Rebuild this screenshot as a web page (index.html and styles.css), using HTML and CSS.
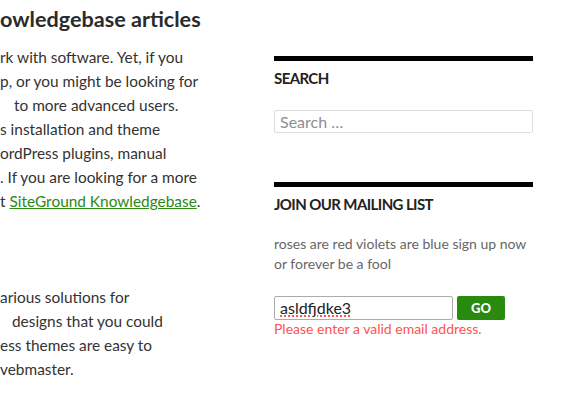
FILE: index.html
```html
<!DOCTYPE html>
<html lang="en">
<head>
<meta charset="utf-8">
<title>Knowledgebase articles</title>
<link rel="stylesheet" href="styles.css">
</head>
<body>
<div class="page">
  <main class="content">
    <h1 class="entry-title">owledgebase articles</h1>
    <p class="text">
      <span class="ln">rk with software. Yet, if you</span>
      <span class="ln">p, or you might be looking for</span>
      <span class="ln ln-in">to more advanced users.</span>
      <span class="ln">s installation and theme</span>
      <span class="ln">ordPress plugins, manual</span>
      <span class="ln">. If you are looking for a more</span>
      <span class="ln">t <a href="#" class="kb-link">SiteGround Knowledgebase</a>.</span>
    </p>
    <p class="text text-second">
      <span class="ln">arious solutions for</span>
      <span class="ln ln-in2">designs that you could</span>
      <span class="ln">ess themes are easy to</span>
      <span class="ln">vebmaster.</span>
    </p>
  </main>
  <aside class="sidebar">
    <section class="widget">
      <h2 class="widget-title">Search</h2>
      <form class="search-form">
        <input class="search-field" type="search" placeholder="Search …">
      </form>
    </section>
    <section class="widget widget-mail">
      <h2 class="widget-title">Join our mailing list</h2>
      <p class="mail-desc">roses are red violets are blue sign up now or forever be a fool</p>
      <form class="mail-form">
        <div class="mail-row">
          <div class="mail-field"><span class="misspelled">asldfjdke3</span></div>
          <button class="mail-go" type="button">GO</button>
        </div>
        <div class="mail-error">Please enter a valid email address.</div>
      </form>
    </section>
  </aside>
</div>
</body>
</html>
```
FILE: styles.css
```css
html, body {
  margin: 0;
  padding: 0;
  background: #fff;
  overflow: hidden;
}

body {
  font-family: Lato, "Open Sans", sans-serif;
  color: #333;
}

.page {
  display: flex;
  width: 561px;
  height: 420px;
}

.content {
  width: 274px;
  flex: none;
}

.entry-title {
  margin: 4px 0 0;
  font-size: 21.6px;
  line-height: 30px;
  font-weight: 700;
  color: #2b2b2b;
}

.text {
  margin: 11px 0 0;
  font-size: 15.4px;
  line-height: 24px;
}

.text-second {
  margin-top: 72px;
}

.ln {
  display: block;
  white-space: nowrap;
}

.ln-in {
  padding-left: 14px;
}

.ln-in2 {
  padding-left: 12px;
}

.kb-link {
  color: #2a8a12;
  text-decoration: underline;
}

.sidebar {
  width: 259px;
  flex: none;
  padding-top: 56px;
}

.widget {
  border-top: 5px solid #000;
}

.widget-mail {
  margin-top: 49px;
}

.widget-title {
  margin: 7px 0 0;
  font-size: 15px;
  line-height: 20px;
  font-weight: 700;
  letter-spacing: -0.6px;
  text-transform: uppercase;
  color: #222;
}

.search-form {
  margin-top: 22px;
}

.search-field {
  display: block;
  box-sizing: border-box;
  width: 259px;
  height: 23px;
  margin: 0;
  padding: 0 5px;
  border: 1px solid #ddd;
  border-radius: 2px;
  font-family: Lato, sans-serif;
  font-size: 16px;
  color: #333;
  background: #fff;
}

.search-field::placeholder {
  color: #8f8f8f;
}

.mail-desc {
  margin: 20px 0 0;
  font-size: 14px;
  line-height: 20px;
  color: #666;
}

.mail-form {
  margin-top: 22px;
}

.mail-row {
  display: flex;
  gap: 4px;
}

.mail-field {
  box-sizing: border-box;
  width: 179px;
  height: 24px;
  padding: 0 5px;
  border: 1px solid #ababab;
  border-radius: 2px;
  font-size: 16px;
  line-height: 22px;
  color: #222;
}

.misspelled {
  text-decoration: underline dotted #e33;
  text-underline-offset: 2px;
}

.mail-go {
  width: 48px;
  height: 24px;
  margin: 0;
  padding: 0;
  border: none;
  border-radius: 2px;
  background: #288a0e;
  color: #fff;
  font-family: Lato, sans-serif;
  font-size: 13px;
  font-weight: 900;
}

.mail-error {
  font-size: 14px;
  line-height: 18px;
  color: #ff5252;
}
```
